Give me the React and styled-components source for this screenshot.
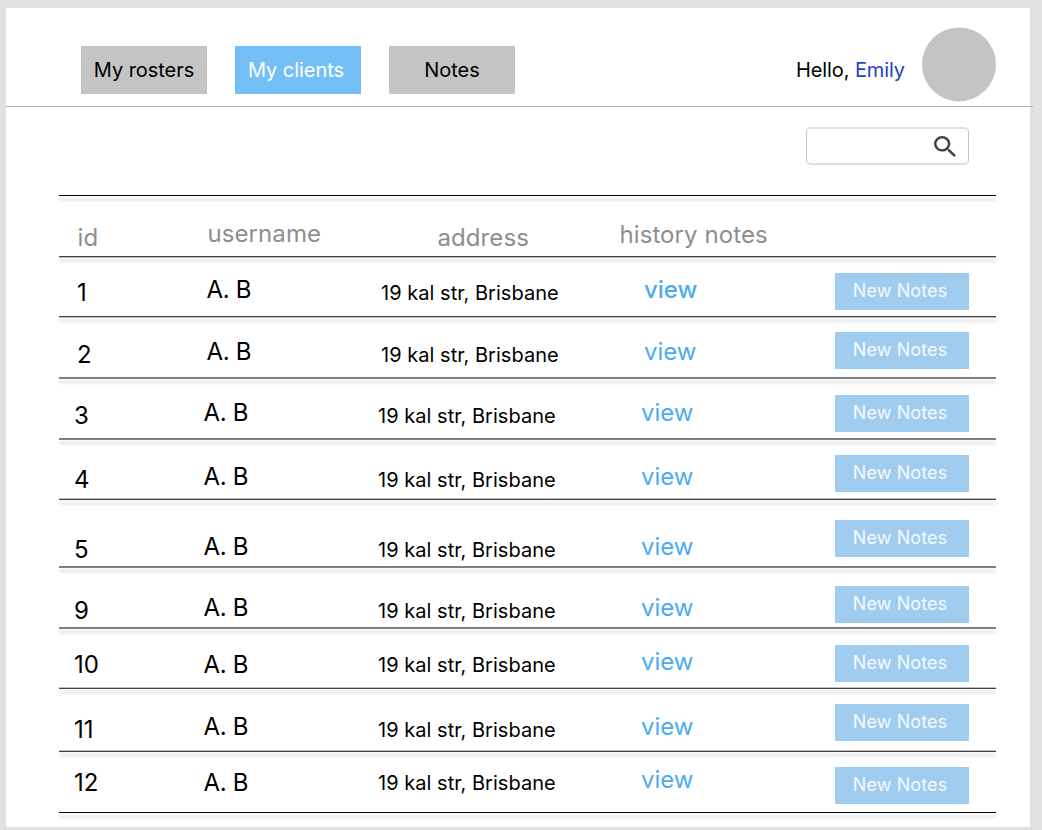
import React from "react";
import styled, { createGlobalStyle } from "styled-components";

const GlobalStyle = createGlobalStyle`
  * { box-sizing: border-box; }
  html, body { margin: 0; height: 830px; overflow: hidden; background: #e1e1e1; }
  body { font-family: Inter, "Liberation Sans", sans-serif; color: #000; }
  button { font: inherit; border: 0; padding: 0; }
`;

const Page = styled.main`
  width: 1024px;
  height: 819px;
  margin: 8px 0 0 6px;
  background: #fff;
`;

const Header = styled.header`
  display: flex;
  align-items: flex-start;
  width: 1027px;
  height: 99px;
  padding-left: 75px;
  border-bottom: 1px solid #b4b4b4;
`;

const Nav = styled.nav`
  display: flex;
  gap: 28px;
  margin-top: 38px;
`;

const NavButton = styled.button`
  width: 126px;
  height: 48px;
  padding-right: ${(p) => (p.$active ? 4 : 0)}px;
  font-size: 20px;
  line-height: 48px;
  letter-spacing: -0.05px;
  background: ${(p) => (p.$active ? "#74bff5" : "#c4c4c4")};
  color: ${(p) => (p.$active ? "#fff" : "#000")};
`;

const Greeting = styled.div`
  margin: 50px 17px 0 auto;
  font-size: 20px;
  line-height: 24px;
  letter-spacing: -0.1px;
  white-space: nowrap;
`;

const UserName = styled.span`
  color: #1c43c8;
`;

const Avatar = styled.div`
  width: 74px;
  height: 74px;
  margin: 19px 37px 0 0;
  border-radius: 50%;
  background: #c4c4c4;
  transform: translateY(0.4px);
`;

const SearchBar = styled.div`
  display: flex;
  justify-content: flex-end;
  height: 88px;
  padding: 20px 61px 0 0;
`;

const SearchBox = styled.label`
  display: flex;
  align-items: center;
  width: 163px;
  height: 38px;
  padding-right: 12px;
  border-style: solid;
  border-width: 2px 1px;
  border-color: #e0e0e0 #c6c6c6;
  border-radius: 5px;
`;

const SearchInput = styled.input`
  flex: 1;
  min-width: 0;
  border: 0;
  outline: 0;
  background: none;
  font: inherit;
`;

const Table = styled.section`
  width: 937px;
  margin-left: 53px;
`;

const edges = {
  solid: [1, 0],
  upper: [0.75, 0.25],
  even: [0.5, 0.5],
  lower: [0.25, 0.75],
};

const Rule = styled.div`
  height: 2px;
  background: linear-gradient(
    rgba(0, 0, 0, ${(p) => edges[p.$edge][0]}) 50%,
    rgba(0, 0, 0, ${(p) => edges[p.$edge][1]}) 50%
  );
  filter: drop-shadow(0 4px 1.5px rgba(0, 0, 0, 0.25));
`;

const Row = styled.div`
  display: grid;
  grid-template-columns: ${(p) => p.$columns} 1fr 134px;
  align-items: start;
  height: ${(p) => p.$height}px;
  padding: 0 27px 0 ${(p) => p.$indent}px;
`;

const Cell = styled.div`
  padding-top: ${(p) => p.$drop}px;
  font-size: 24px;
  line-height: 30px;
  white-space: nowrap;
`;

const HeadCell = styled(Cell)`
  color: #8e8e8e;
  letter-spacing: 0.08px;
`;

const Name = styled(Cell)`
  letter-spacing: -0.3px;
`;

const Address = styled(Cell)`
  font-size: 20px;
  letter-spacing: 0.03px;
`;

const ViewLink = styled(Cell)`
  color: #4dabf1;
  font-weight: ${(p) => (p.$strong ? 500 : 400)};
`;

const NoteButton = styled.button`
  width: 134px;
  height: 37px;
  margin-top: ${(p) => p.$drop}px;
  padding: 0 4px 2px 0;
  background: #a0cdef;
  color: #f5faff;
  font-size: 18px;
  line-height: 35px;
  letter-spacing: 0.1px;
`;

const clients = [
  { id: 1, top: 258, end: 316, edge: "upper", text: [301, 298, 300, 299], button: 273, indent: 18, strong: true },
  { id: 2, top: 318, end: 377, edge: "even", text: [363, 360, 362, 361], button: 332, indent: 18 },
  { id: 3, top: 379, end: 438, edge: "even", text: [424, 421, 423, 422], button: 395, indent: 15 },
  { id: 4, top: 440, end: 498, edge: "lower", text: [488, 485, 487, 486], button: 455, indent: 15 },
  { id: 5, top: 500, end: 566, edge: "even", text: [558, 555, 557, 556], button: 520, indent: 15 },
  { id: 9, top: 568, end: 627, edge: "even", text: [619, 616, 618, 617], button: 586, indent: 15 },
  { id: 10, top: 629, end: 687, edge: "lower", text: [673, 673, 672, 671], button: 645, indent: 15 },
  { id: 11, top: 689, end: 750, edge: "lower", text: [738, 735, 737, 736], button: 704, indent: 15 },
  { id: 12, top: 752, end: 812, edge: "solid", text: [791, 791, 790, 789], button: 767, indent: 15 },
];

function ClientRow({ client }) {
  const { id, top, end, edge, text, button, indent, strong } = client;
  const [idDrop, nameDrop, addressDrop, viewDrop] = text.map((base) => base - top);
  return (
    <>
      <Row $height={end - top} $indent={indent} $columns="129.5px 174.5px 263px">
        <Cell $drop={idDrop - 23}>{id}</Cell>
        <Name $drop={nameDrop - 23}>A. B</Name>
        <Address $drop={addressDrop - 22}>19 kal str, Brisbane</Address>
        <ViewLink $drop={viewDrop - 24} $strong={strong}>view</ViewLink>
        <NoteButton $drop={button - top}>New Notes</NoteButton>
      </Row>
      <Rule $edge={edge} />
    </>
  );
}

export default function App() {
  return (
    <>
      <GlobalStyle />
      <Page>
        <Header>
          <Nav>
            <NavButton>My rosters</NavButton>
            <NavButton $active>My clients</NavButton>
            <NavButton>Notes</NavButton>
          </Nav>
          <Greeting>
            Hello, <UserName>Emily</UserName>
          </Greeting>
          <Avatar />
        </Header>
        <SearchBar>
          <SearchBox>
            <SearchInput aria-label="Search" />
            <svg width="22" height="21" viewBox="3 3 17.5 17.5" preserveAspectRatio="none" fill="#444">
              <path d="M15.5 14h-.79l-.28-.27A6.47 6.47 0 0 0 16 9.5 6.5 6.5 0 1 0 9.5 16c1.61 0 3.09-.59 4.23-1.57l.27.28v.79l5 4.99L20.49 19l-4.99-5zm-6 0C7.01 14 5 11.99 5 9.5S7.01 5 9.5 5 14 7.01 14 9.5 11.99 14 9.5 14z" />
            </svg>
          </SearchBox>
        </SearchBar>
        <Table>
          <Rule $edge="solid" />
          <Row $height={59} $indent={18.5} $columns="130px 230px 182px">
            <HeadCell $drop={26}>id</HeadCell>
            <HeadCell $drop={22}>username</HeadCell>
            <HeadCell $drop={26}>address</HeadCell>
            <HeadCell $drop={23}>history notes</HeadCell>
          </Row>
          <Rule $edge="upper" />
          {clients.map((client) => (
            <ClientRow key={client.id} client={client} />
          ))}
        </Table>
      </Page>
    </>
  );
}
